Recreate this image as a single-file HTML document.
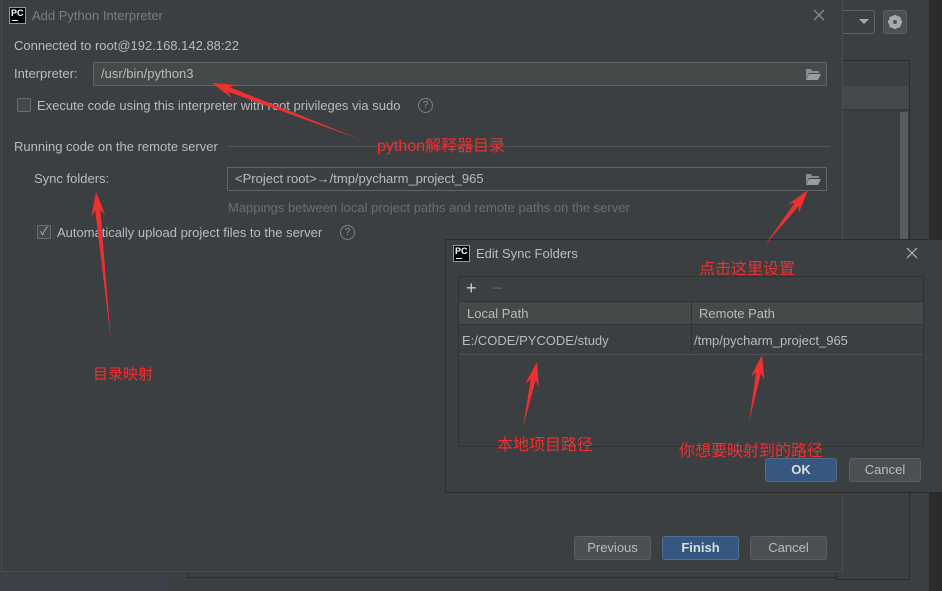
<!DOCTYPE html>
<html><head><meta charset="utf-8"><style>
*{margin:0;padding:0;box-sizing:border-box}
body{width:942px;height:591px;overflow:hidden;background:#3c3f41;position:relative;font-family:"Liberation Sans","Noto Sans CJK SC",sans-serif;font-size:13px;color:#bbbbbb}
.a{position:absolute}
.field{position:absolute;border:1px solid #646464;background:#45494a;color:#bbb;padding:0 7px;line-height:22px;height:24px}
.btn{position:absolute;border:1px solid #5e6060;background:#4c5052;color:#bbb;text-align:center;line-height:22px;height:24px;border-radius:3px}
.btn.pri{background:#365880;border-color:#4c708c;color:#ddd;font-weight:bold}
.pc{position:absolute;width:17px;height:17px;background:#000;border:1.5px solid #21d789;color:#fff;font-size:9px;font-weight:bold;line-height:10px;padding-left:1px}
.pc:after{content:"";position:absolute;left:2px;bottom:2px;width:6px;height:1.5px;background:#fff}
.red{position:absolute;color:#f03030;font-size:16px;font-family:"Liberation Sans","Noto Sans CJK SC",sans-serif}
.q{position:absolute;width:15px;height:15px;border:1.3px solid #808080;border-radius:50%;color:#909090;font-size:10px;text-align:center;line-height:13px}
.cb{position:absolute;width:14px;height:14px;border:1px solid #6b6b6b;background:#43494a;border-radius:2px}
</style></head><body>
<div class="a" style="left:929px;top:0;width:13px;height:591px;background:#2b2b2b"></div>
<div class="a" style="left:835px;top:10px;width:40px;height:24px;border:1px solid #646464;border-radius:3px"></div>
<div class="a" style="left:859px;top:19px;width:0;height:0;border-left:5px solid transparent;border-right:5px solid transparent;border-top:5px solid #aaa"></div>
<div class="a" style="left:883px;top:10px;width:24px;height:24px;background:#4c5052;border:1px solid #5e6060;border-radius:3px"></div>
<svg class="a" style="left:887px;top:14px" width="16" height="16"><circle cx="8" cy="8" r="5" fill="none" stroke="#aaa" stroke-width="3"/><g stroke="#aaa" stroke-width="2.5"><line x1="8" y1="1" x2="8" y2="15"/><line x1="1" y1="8" x2="15" y2="8"/><line x1="3" y1="3" x2="13" y2="13"/><line x1="13" y1="3" x2="3" y2="13"/></g><circle cx="8" cy="8" r="2" fill="#4c5052"/></svg>
<div class="a" style="left:836px;top:60px;width:74px;height:520px;border:1px solid #2b2b2b"></div>
<div class="a" style="left:836px;top:86px;width:73px;height:24px;background:#45494a;border-bottom:1px solid #333"></div>
<div class="a" style="left:900px;top:112px;width:8px;height:140px;background:#5a5d5f"></div>
<div class="a" style="left:0;top:571px;width:168px;height:20px;background:#3d4049"></div>
<div class="a" style="left:187px;top:571px;width:650px;height:7px;border-left:1px solid #2b2b2b;border-bottom:1px solid #2b2b2b"></div>
<div class="a" style="left:1px;top:0;width:842px;height:572px;background:#3c3f41;border:1px solid #4a4c4e;border-top:none"></div>
<div class="pc" style="left:9px;top:7px">PC</div>
<div class="a" style="left:32px;top:8px;color:#7c7e80;font-size:13px">Add Python Interpreter</div>
<svg class="a" style="left:813px;top:9px" width="12" height="12"><path d="M1 1L11 11M11 1L1 11" stroke="#8a8a8a" stroke-width="1.3"/></svg>
<div class="a" style="left:14px;top:38px">Connected to root@192.168.142.88:22</div>
<div class="a" style="left:14px;top:66px">Interpreter:</div>
<div class="field" style="left:93px;top:62px;width:734px">/usr/bin/python3</div>
<div class="cb" style="left:17px;top:98px"></div>
<div class="a" style="left:37px;top:98px">Execute code using this interpreter with root privileges via sudo</div>
<div class="q" style="left:418px;top:98px">?</div>
<div class="a" style="left:14px;top:139px">Running code on the remote server</div>
<div class="a" style="left:227px;top:146px;width:603px;height:1px;background:#555"></div>
<div class="a" style="left:34px;top:171px">Sync folders:</div>
<div class="field" style="left:227px;top:167px;width:600px;background:#3c3f41">&lt;Project root&gt;→/tmp/pycharm_project_965</div>
<div class="a" style="left:228px;top:200px;color:#6b6e70">Mappings between local project paths and remote paths on the server</div>
<div class="cb" style="left:37px;top:225px;color:#bbb;font-size:11px;line-height:12px;text-align:center">✓</div>
<div class="a" style="left:57px;top:225px">Automatically upload project files to the server</div>
<div class="q" style="left:340px;top:225px">?</div>
<div class="btn" style="left:574px;top:536px;width:77px">Previous</div>
<div class="btn pri" style="left:662px;top:536px;width:77px">Finish</div>
<div class="btn" style="left:750px;top:536px;width:77px">Cancel</div>
<svg class="a" style="left:806px;top:68px" width="15" height="12"><path d="M0 1h5l1 2h7v2H3L0 11z" fill="#8a8d90"/><path d="M3 6h12l-3 6H0z" fill="#9a9da0"/></svg>
<svg class="a" style="left:806px;top:173px" width="15" height="12"><path d="M0 1h5l1 2h7v2H3L0 11z" fill="#8a8d90"/><path d="M3 6h12l-3 6H0z" fill="#9a9da0"/></svg>
<div class="a" style="left:445px;top:239px;width:497px;height:254px;background:#3c3f41;border:1px solid #2b2b2b;border-right:none"></div>
<div class="pc" style="left:453px;top:245px">PC</div>
<div class="a" style="left:476px;top:246px;color:#bbb">Edit Sync Folders</div>
<svg class="a" style="left:906px;top:247px" width="12" height="12"><path d="M1 1L11 11M11 1L1 11" stroke="#aaa" stroke-width="1.3"/></svg>
<div class="a" style="left:458px;top:276px;width:466px;height:171px;border:1px solid #323232"></div>
<div class="a" style="left:466px;top:278px;color:#ccc;font-size:18px">+</div>
<div class="a" style="left:492px;top:278px;color:#666;font-size:18px">−</div>
<div class="a" style="left:459px;top:301px;width:464px;height:24px;background:#45494a;border-top:1px solid #323232;border-bottom:1px solid #323232"></div>
<div class="a" style="left:691px;top:301px;width:1px;height:54px;background:#323232"></div>
<div class="a" style="left:467px;top:306px">Local Path</div>
<div class="a" style="left:699px;top:306px">Remote Path</div>
<div class="a" style="left:459px;top:354px;width:464px;height:1px;background:#4e5254"></div>
<div class="a" style="left:462px;top:333px">E:/CODE/PYCODE/study</div>
<div class="a" style="left:694px;top:333px">/tmp/pycharm_project_965</div>
<div class="btn pri" style="left:765px;top:458px;width:72px">OK</div>
<div class="btn" style="left:849px;top:458px;width:72px">Cancel</div>
<div class="red" style="left:377px;top:132px">python解释器目录</div>
<div class="red" style="left:93px;top:363px;font-size:15px">目录映射</div>
<div class="red" style="left:699px;top:255px">点击这里设置</div>
<div class="red" style="left:497px;top:431px">本地项目路径</div>
<div class="red" style="left:679px;top:437px">你想要映射到的路径</div>
<svg class="a" style="left:0;top:0" width="942" height="591" id="ar"></svg>
<script>
var A=[[362,140,212,83],[111,342,96,192],[765,245,808,190],[523,427,537,362],[749,422,762,355]];
var s='';
A.forEach(function(a){var tx=a[0],ty=a[1],hx=a[2],hy=a[3];var dx=hx-tx,dy=hy-ty,L=Math.sqrt(dx*dx+dy*dy);var ux=dx/L,uy=dy/L,px=-uy,py=ux;
var bx=hx-ux*24,by=hy-uy*24;var nx=hx-ux*18,ny=hy-uy*18;
function p(x,y){return x.toFixed(1)+','+y.toFixed(1)}
s+='<polygon fill="#f03030" points="'+[p(tx,ty),p(nx+px*2.5,ny+py*2.5),p(bx+px*7,by+py*7),p(hx,hy),p(bx-px*7,by-py*7),p(nx-px*2.5,ny-py*2.5)].join(' ')+'"/>';});
document.getElementById('ar').innerHTML=s;
</script>
</body></html>
